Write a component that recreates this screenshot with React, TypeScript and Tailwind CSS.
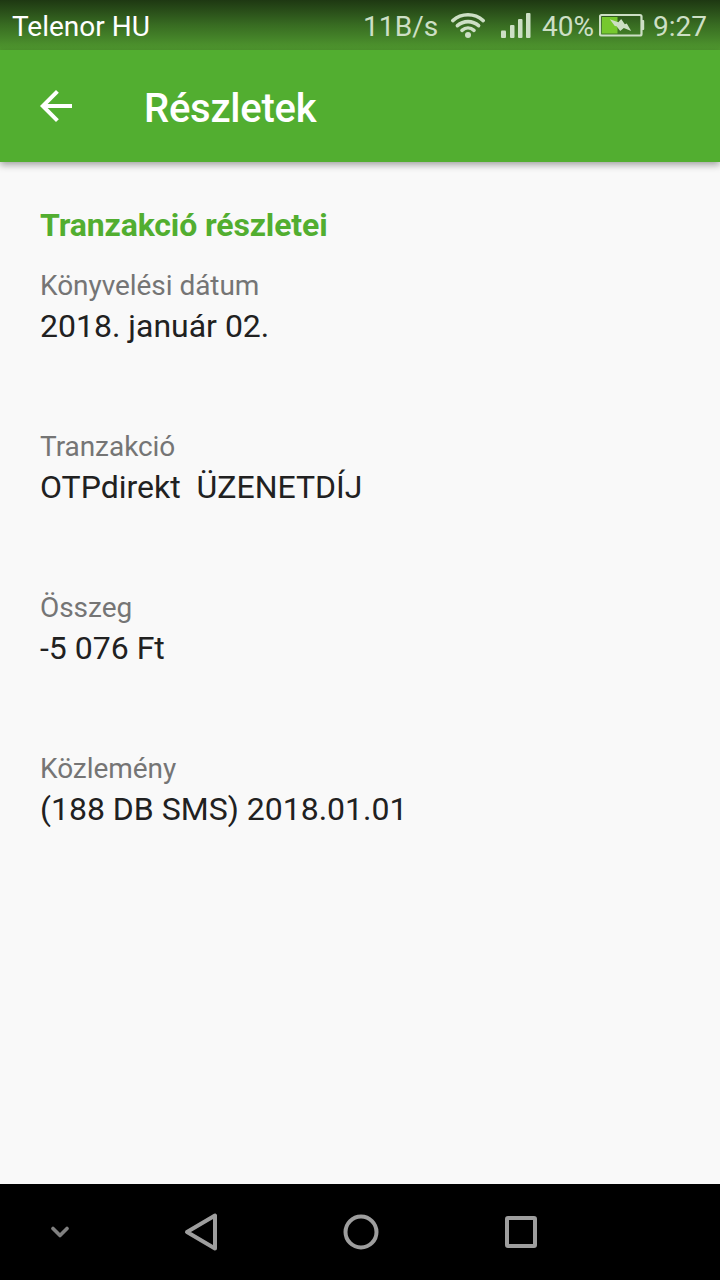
const DETAILS = [
  { label: "Könyvelési dátum", value: "2018. január 02." },
  { label: "Tranzakció", value: "OTPdirekt  ÜZENETDÍJ" },
  { label: "Összeg", value: "-5 076 Ft" },
  { label: "Közlemény", value: "(188 DB SMS) 2018.01.01" },
];

function WifiIcon() {
  return (
    <svg width="36" height="28" viewBox="0 0 36 28" fill="none" stroke="currentColor" strokeWidth="3.6" strokeLinecap="round">
      <path d="M2.8 8.6C11.5 0.8 24.5 0.8 33.2 8.6" />
      <path d="M7.4 13.7C13.5 8.2 22.5 8.2 28.6 13.7" />
      <path d="M12 18.3C15.6 15.2 20.4 15.2 24 18.3" />
      <circle cx="18" cy="23" r="3" fill="currentColor" stroke="none" />
    </svg>
  );
}

function SignalIcon() {
  return (
    <svg width="30" height="26" viewBox="0 0 30 26" fill="currentColor">
      <rect x="0" y="17.5" width="5" height="7.5" rx="1" />
      <rect x="9" y="12" width="4.5" height="13" rx="1" />
      <rect x="17" y="6" width="4.5" height="19" rx="1" />
      <rect x="25" y="0" width="4.5" height="25" rx="1" />
    </svg>
  );
}

function BatteryIcon() {
  return (
    <svg width="46" height="26" viewBox="0 0 46 26" fill="none">
      <rect x="1" y="2" width="41.5" height="20.5" rx="1.5" stroke="currentColor" strokeWidth="2.2" />
      <path d="M43 7h1.4q.8 0 .8 1v8q0 1-.8 1H43z" fill="currentColor" />
      <rect x="3" y="4" width="15.5" height="16.5" fill="#76c82e" />
      <path d="M10.8 6.3L19.3 9.3L22.2 6L25.8 11.3L27.8 10.6L32.2 18L24.8 15L21.2 18L17.6 13.3L15.8 13Z" fill="currentColor" />
    </svg>
  );
}

function StatusBar() {
  return (
    <div className="flex h-[50px] items-center bg-linear-to-b from-[#1e3812] via-[#386c22] to-[#50992f] pt-[3px] pr-[13px] pl-3 text-[28px] leading-[33px] text-[#cddfc5]">
      <span className="flex-1 text-white">Telenor HU</span>
      <span className="w-[87px] tracking-[0.1px]">11B/s</span>
      <span className="w-[51px] pb-0.5"><WifiIcon /></span>
      <span className="w-[41px] pb-0.5"><SignalIcon /></span>
      <span className="w-[57px]">40%</span>
      <span className="w-[54px] pb-0.5"><BatteryIcon /></span>
      <span>9:27</span>
    </div>
  );
}

function AppBar() {
  return (
    <header className="relative flex h-28 items-center bg-[#52ae30] pl-10 text-white shadow-[0_3px_7px_rgba(0,0,0,0.35)]">
      <button type="button" aria-label="Vissza" className="mr-[72px]">
        <svg width="32" height="32" viewBox="4 4 16 16" fill="currentColor">
          <path d="M20 11H7.83l5.59-5.59L12 4l-8 8 8 8 1.41-1.41L7.83 13H20v-2z" />
        </svg>
      </button>
      <h1 className="pt-1.5 text-[40px] leading-[48px] font-medium tracking-[-0.25px]">Részletek</h1>
    </header>
  );
}

function NavigationBar() {
  return (
    <nav className="flex h-24 items-center bg-black pl-[50px] text-[#9e9e9e]">
      <svg className="mr-[114px]" width="20" height="12" viewBox="0 0 20 12" fill="none" stroke="#808080" strokeWidth="3.6" strokeLinecap="round" strokeLinejoin="round">
        <path d="M3 2.5L10 9.5L17 2.5" />
      </svg>
      <svg className="mr-[124px]" width="34" height="40" viewBox="0 0 34 40" fill="none" stroke="currentColor" strokeWidth="4" strokeLinejoin="round">
        <path d="M31 3.5V36.5L3 20Z" />
      </svg>
      <svg className="mr-[125px]" width="38" height="38" viewBox="0 0 38 38" fill="none" stroke="currentColor" strokeWidth="4">
        <circle cx="19" cy="19" r="15.5" />
      </svg>
      <svg width="32" height="32" viewBox="0 0 32 32" fill="none" stroke="currentColor" strokeWidth="4">
        <rect x="2" y="2" width="28" height="28" rx="1" />
      </svg>
    </nav>
  );
}

export default function App() {
  return (
    <div className="flex h-[1280px] w-[720px] flex-col overflow-hidden bg-[#f9f9f9] font-[Roboto,sans-serif]">
      <StatusBar />
      <AppBar />
      <main className="flex-1 px-10 pt-11">
        <h2 className="mb-[25px] text-[32px] leading-[38px] font-bold tracking-[-0.13px] text-[#52ae30]">Tranzakció részletei</h2>
        <dl className="flex flex-col gap-[85px]">
          {DETAILS.map((item) => (
            <div key={item.label}>
              <dt className="mb-[5px] text-[28px] leading-[33px] tracking-[-0.05px] text-[#757575]">{item.label}</dt>
              <dd className="text-[32px] leading-[38px] whitespace-pre text-[#212121]">{item.value}</dd>
            </div>
          ))}
        </dl>
      </main>
      <NavigationBar />
    </div>
  );
}
